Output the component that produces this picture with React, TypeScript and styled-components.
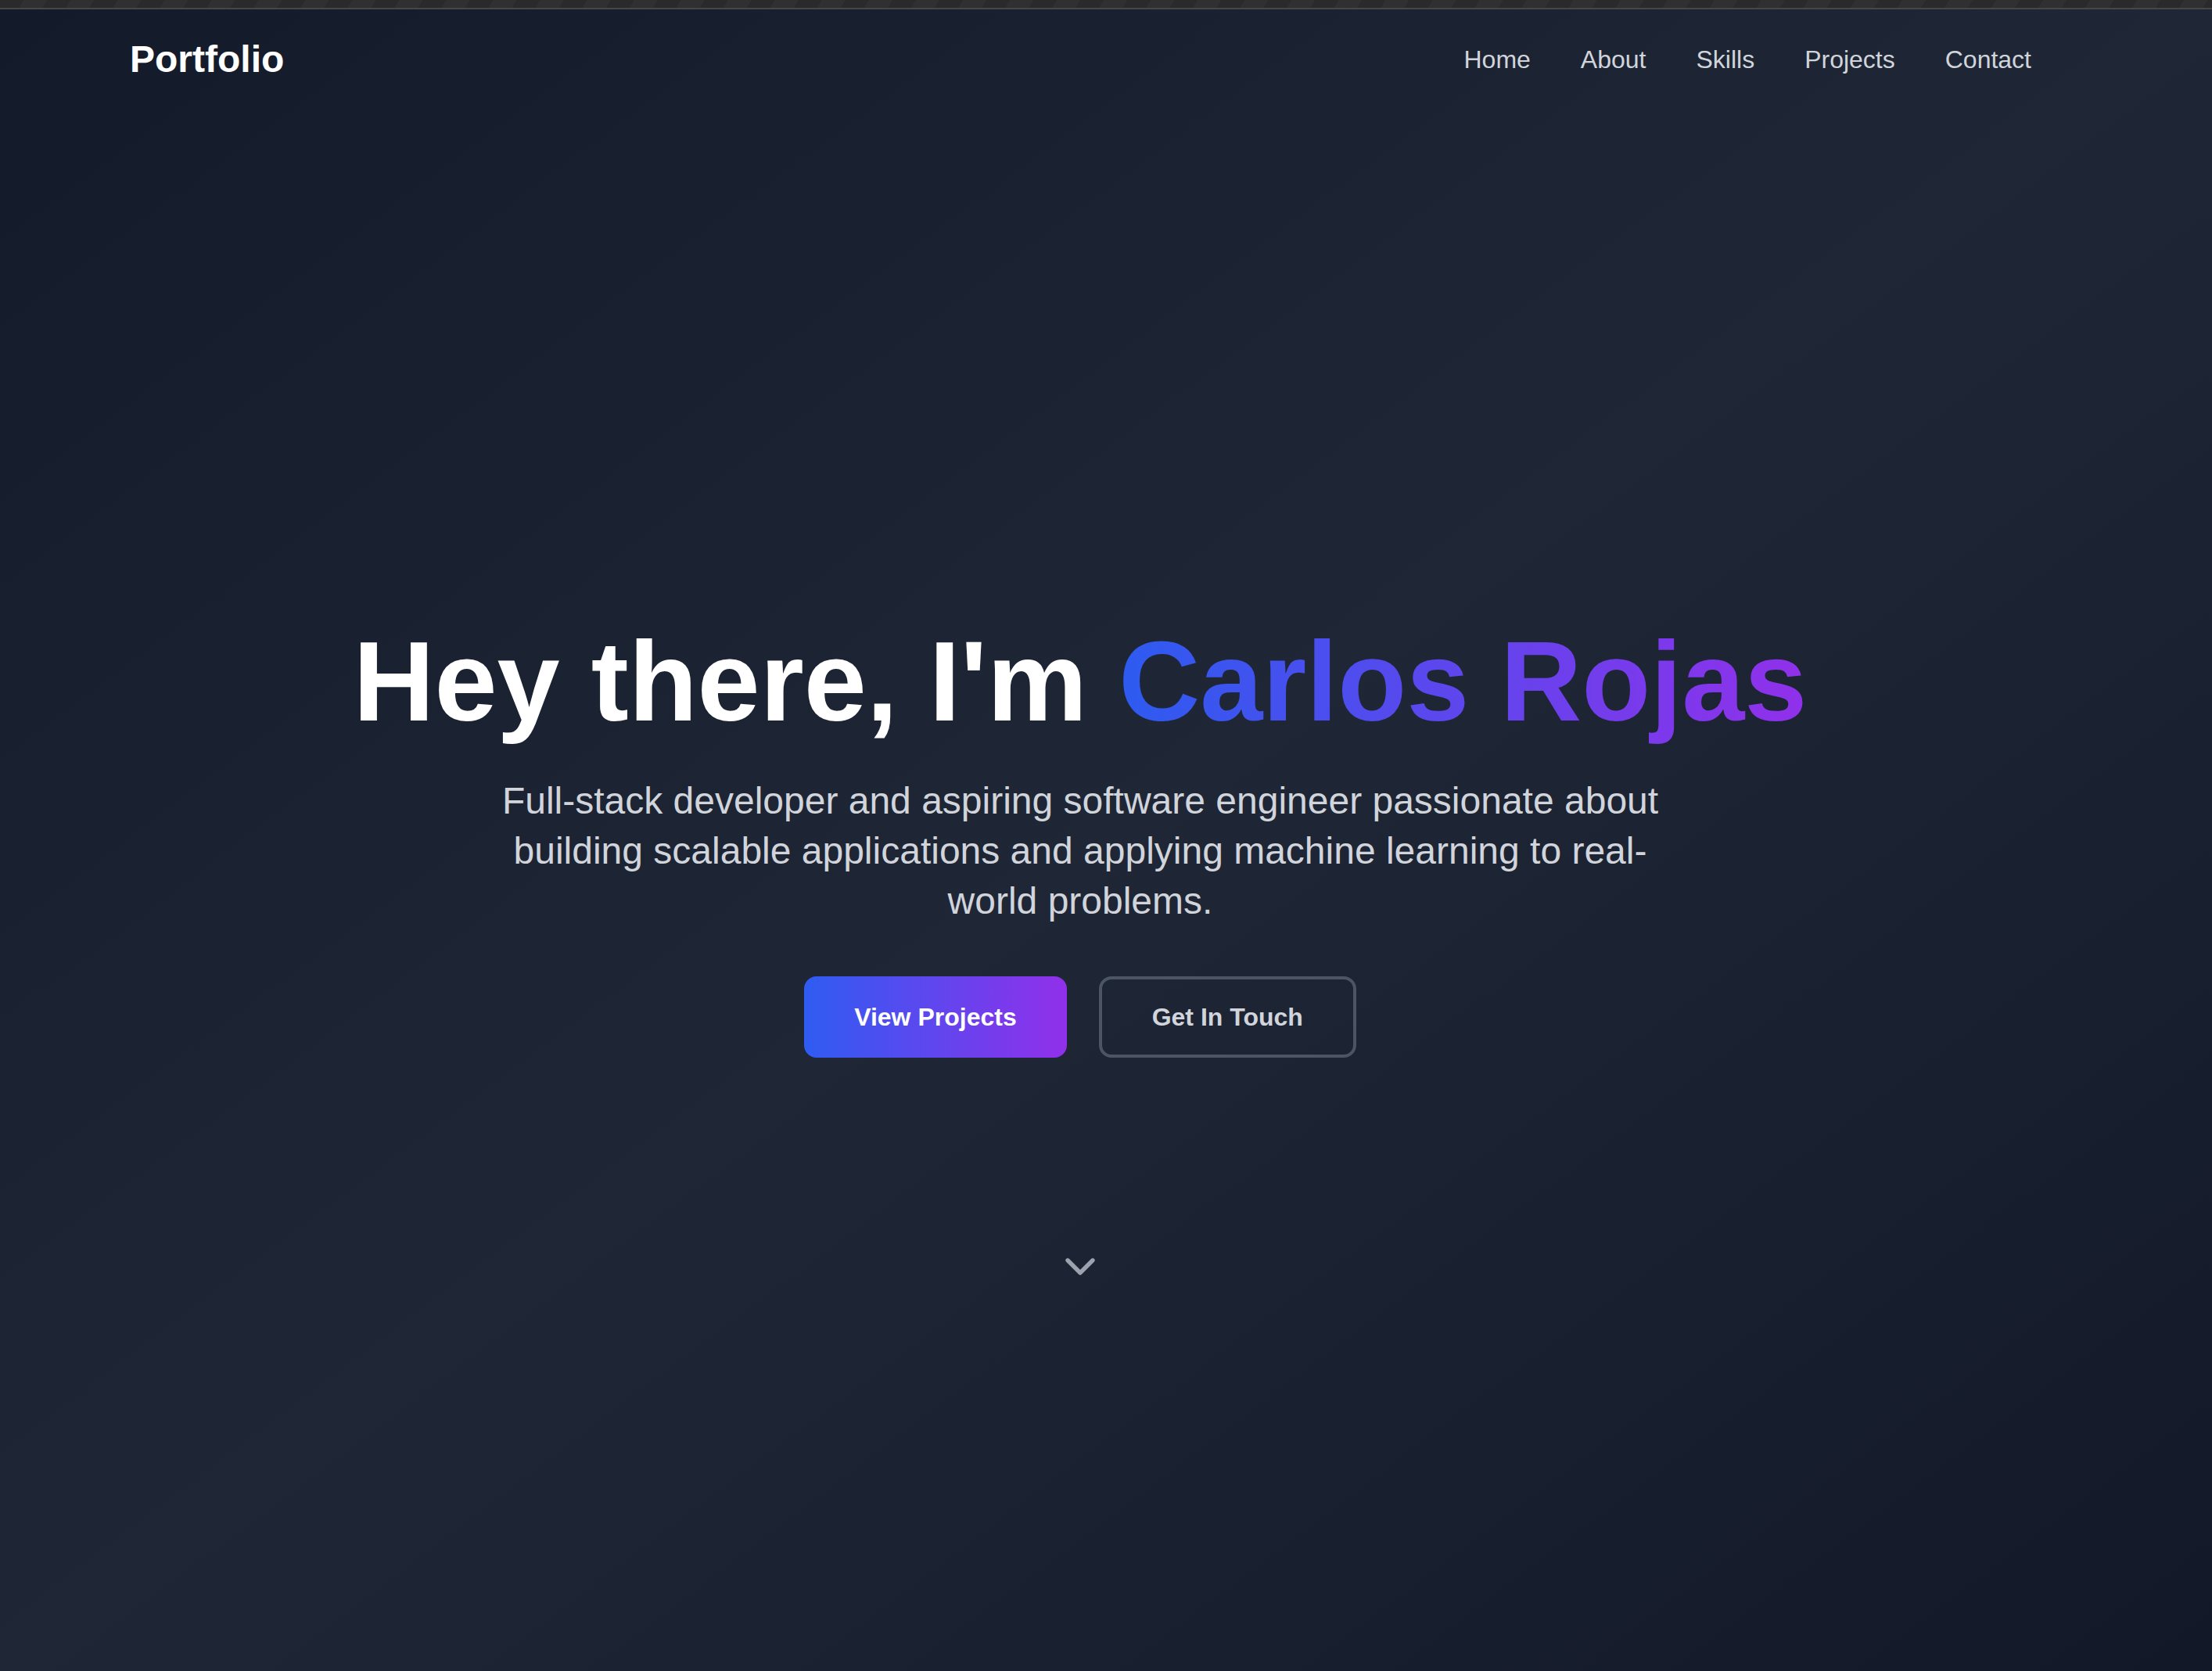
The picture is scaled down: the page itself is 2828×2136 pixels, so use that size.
import React from "react";
import styled, { createGlobalStyle } from "styled-components";
import { ChevronDown } from "lucide-react";

const GlobalStyle = createGlobalStyle`
  html, body {
    margin: 0;
    padding: 0;
    background: #111827;
  }
  * { box-sizing: border-box; }
  body {
    font-family: "Liberation Sans", Arial, Helvetica, sans-serif;
    -webkit-font-smoothing: antialiased;
  }
`;

const Page = styled.div`
  min-height: 100vh;
  display: flex;
  flex-direction: column;
`;

const ChromeStrip = styled.div`
  height: 12px;
  flex: none;
  background: repeating-linear-gradient(
    120deg,
    #2a2a2a 0px,
    #2a2a2a 26px,
    #303030 26px,
    #303030 52px
  );
  border-bottom: 2px solid #474747;
`;

const Hero = styled.section`
  flex: 1;
  display: flex;
  flex-direction: column;
  background: linear-gradient(to bottom right, #131a2a, #1f2737, #121828);
`;

const Frame = styled.div`
  margin-right: 66px;
  display: flex;
  flex-direction: column;
`;

const Nav = styled.nav`
  height: 128px;
  padding: 0 165px 0 166px;
  display: flex;
  align-items: center;
  justify-content: space-between;
`;

const Brand = styled.div`
  font-size: 48px;
  line-height: 64px;
  font-weight: 700;
  color: #ffffff;
`;

const NavLinks = styled.ul`
  list-style: none;
  margin: 0;
  padding: 0;
  display: flex;
  gap: 64px;
`;

const NavLink = styled.a`
  font-size: 32px;
  line-height: 48px;
  color: #d1d5db;
  text-decoration: none;
  cursor: pointer;
`;

const Content = styled.div`
  padding-top: 660px;
  display: flex;
  flex-direction: column;
  align-items: center;
  text-align: center;
`;

const Title = styled.h1`
  margin: 0 0 48px;
  font-size: 144px;
  line-height: 144px;
  font-weight: 700;
  color: #ffffff;
  white-space: nowrap;
`;

const GradientName = styled.span`
  background: linear-gradient(to right, #2d5bf0, #9130ea);
  -webkit-background-clip: text;
  background-clip: text;
  color: transparent;
`;

const Lead = styled.p`
  margin: 0 0 64px;
  max-width: 1536px;
  font-size: 48px;
  line-height: 64px;
  color: #d1d5db;
`;

const Actions = styled.div`
  display: flex;
  gap: 41px;
  justify-content: center;
`;

const Button = styled.a<{ $variant: "primary" | "outline" }>`
  display: inline-flex;
  align-items: center;
  justify-content: center;
  height: 104px;
  padding: 0 64px;
  border-radius: 16px;
  font-size: 32px;
  line-height: 48px;
  font-weight: 700;
  text-decoration: none;
  cursor: pointer;
  color: ${(p) => (p.$variant === "primary" ? "#ffffff" : "#d1d5db")};
  background: ${(p) =>
    p.$variant === "primary"
      ? "linear-gradient(to right, #2f5cf2, #9130ea)"
      : "transparent"};
  border: ${(p) => (p.$variant === "outline" ? "4px solid #4b5563" : "none")};
`;

const ScrollHint = styled.div`
  margin-top: 235px;
  display: flex;
  justify-content: center;
  color: #9ca3af;
`;

export default function App() {
  const links = ["Home", "About", "Skills", "Projects", "Contact"];
  return (
    <>
      <GlobalStyle />
      <Page>
        <ChromeStrip />
        <Hero>
          <Frame>
            <Nav>
              <Brand>Portfolio</Brand>
              <NavLinks>
                {links.map((l) => (
                  <li key={l}>
                    <NavLink>{l}</NavLink>
                  </li>
                ))}
              </NavLinks>
            </Nav>
            <Content>
              <Title>
                Hey there, I'm <GradientName>Carlos Rojas</GradientName>
              </Title>
              <Lead>
                Full-stack developer and aspiring software engineer passionate
                about building scalable applications and applying machine
                learning to real-world problems.
              </Lead>
              <Actions>
                <Button $variant="primary">View Projects</Button>
                <Button $variant="outline">Get In Touch</Button>
              </Actions>
              <ScrollHint>
                <ChevronDown size={64} strokeWidth={2} />
              </ScrollHint>
            </Content>
          </Frame>
        </Hero>
      </Page>
    </>
  );
}
